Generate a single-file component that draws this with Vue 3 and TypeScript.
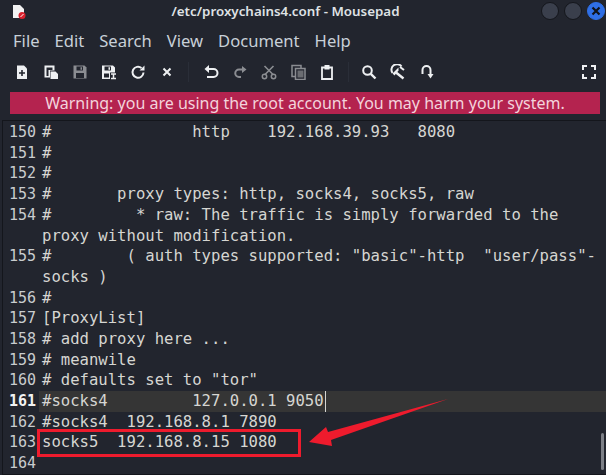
<script setup lang="ts">
const menus: string[] = ['File', 'Edit', 'Search', 'View', 'Document', 'Help']

interface Line { n: string; text: string; wrap?: string; current?: boolean }
const lines: Line[] = [
  { n: '150', text: '#               http    192.168.39.93   8080' },
  { n: '151', text: '#' },
  { n: '152', text: '#' },
  { n: '153', text: '#       proxy types: http, socks4, socks5, raw' },
  { n: '154', text: '#         * raw: The traffic is simply forwarded to the', wrap: 'proxy without modification.' },
  { n: '155', text: '#        ( auth types supported: "basic"-http  "user/pass"-', wrap: 'socks )' },
  { n: '156', text: '#' },
  { n: '157', text: '[ProxyList]' },
  { n: '158', text: '# add proxy here ...' },
  { n: '159', text: '# meanwile' },
  { n: '160', text: '# defaults set to "tor"' },
  { n: '161', text: '#socks4         127.0.0.1 9050', current: true },
  { n: '162', text: '#socks4  192.168.8.1 7890' },
  { n: '163', text: 'socks5  192.168.8.15 1080' },
  { n: '164', text: '' },
]
</script>

<template>
  <div class="win">
    <header class="titlebar">
      <svg class="appicon" width="14" height="15" viewBox="0 0 14 15">
        <path d="M1 1h7l4 4v9H1z" fill="#f2f2f2" />
        <circle cx="10" cy="11.500" r="3.500" fill="#d8202c" />
        <path d="M8.500 13l3-3" stroke="#fff" stroke-width="1" />
      </svg>
      <span class="title">/etc/proxychains4.conf - Mousepad</span>
      <div class="wbtns">
        <span class="wbtn"></span>
        <span class="wbtn"></span>
        <span class="wbtn close">
          <svg width="10" height="10" viewBox="0 0 10 10"><path d="M1.500 1.500l7 7M8.500 1.500l-7 7" stroke="#10131a" stroke-width="2.200" /></svg>
        </span>
      </div>
    </header>

    <nav class="menubar">
      <span v-for="m in menus" :key="m">{{ m }}</span>
    </nav>

    <div class="toolbar">
      <span class="tool">
        <svg viewBox="0 0 16 16"><path d="M3 1.500h7l3 3v10.500H3z" fill="#eef0f2" /><path d="M8 6v6M5 9h6" stroke="#22252e" stroke-width="1.600" /></svg>
      </span>
      <span class="tool">
        <svg viewBox="0 0 16 16"><path d="M1.500 1.500h10v5H7v7H1.500z" fill="#eef0f2" /><path d="M7.500 7.500h5l2.500 2.500v5H7.500z" fill="#eef0f2" /><path d="M3.500 3.500h6v2.500H5.500v6h-2z" fill="#22252e" /></svg>
      </span>
      <span class="tool">
        <svg viewBox="0 0 16 16"><path d="M1.500 1.500h11l2 2v11h-13z" fill="#8b8d92" /><path d="M4.500 2.500h6.500v4H4.500zM4 9h8v5H4z" fill="#22252e" /><path d="M8.500 3.200h1.500v2.500H8.500z" fill="#8b8d92" /></svg>
      </span>
      <span class="tool">
        <svg viewBox="0 0 16 16"><path d="M1 1.500h11l2 2v5H9V15H1z" fill="#eef0f2" /><path d="M3.500 2.500h6.500v4H3.500zM3 9.500h5v4H3z" fill="#22252e" /><path d="M7.500 3.200h1.500v2.500H7.500z" fill="#eef0f2" /><path d="M10 10h5M12.500 10v4.500M10 14.500h5" stroke="#eef0f2" stroke-width="1.500" fill="none" /></svg>
      </span>
      <span class="tool">
        <svg viewBox="0 0 16 16"><path d="M13.500 8.500A5.500 5.500 0 1 1 11.500 4" fill="none" stroke="#eef0f2" stroke-width="2" /><path d="M9.500 6.500H14.500V1.500z" fill="#eef0f2" /></svg>
      </span>
      <span class="tool">
        <svg viewBox="0 0 16 16"><path d="M4.500 4.500l7 7M11.500 4.500l-7 7" stroke="#eef0f2" stroke-width="2" /></svg>
      </span>
      <span class="sep first"></span>
      <span class="tool">
        <svg viewBox="0 0 16 16"><path d="M5 5h5.500a3.500 3.500 0 0 1 0 8H4" fill="none" stroke="#eef0f2" stroke-width="2" /><path d="M6 1v8L1.500 5z" fill="#eef0f2" /></svg>
      </span>
      <span class="tool">
        <svg viewBox="0 0 16 16"><path d="M11 5.500H7a3.500 3.500 0 0 0 0 7.500h2" fill="none" stroke="#8b8d92" stroke-width="2" /><path d="M10 2v7L14.500 5.500z" fill="#8b8d92" /></svg>
      </span>
      <span class="tool">
        <svg viewBox="0 0 16 16"><path d="M3.500 2l9 9M12.500 2l-9 9" stroke="#8b8d92" stroke-width="1.600" /><circle cx="3.500" cy="12.500" r="2.200" fill="none" stroke="#8b8d92" stroke-width="1.500" /><circle cx="12.500" cy="12.500" r="2.200" fill="none" stroke="#8b8d92" stroke-width="1.500" /></svg>
      </span>
      <span class="tool">
        <svg viewBox="0 0 16 16"><path d="M2 1.500h9v11H2z" fill="none" stroke="#8b8d92" stroke-width="1.500" /><path d="M5.500 4.500h9.500v11H5.500z" fill="#22252e" stroke="#8b8d92" stroke-width="1.500" /><path d="M7.500 6.500h6v7h-6z" fill="#6b6d72" /></svg>
      </span>
      <span class="tool">
        <svg viewBox="0 0 16 16"><path d="M3 3.500h10V15H3z" fill="none" stroke="#eef0f2" stroke-width="1.800" /><path d="M5.500 1h5V5.500h-5z" fill="#eef0f2" /></svg>
      </span>
      <span class="sep"></span>
      <span class="tool">
        <svg viewBox="0 0 16 16"><circle cx="6.500" cy="6.500" r="4.300" fill="none" stroke="#eef0f2" stroke-width="2" /><path d="M9.800 9.800l4.700 4.700" stroke="#eef0f2" stroke-width="2.400" /></svg>
      </span>
      <span class="tool">
        <svg viewBox="0 0 16 16"><path d="M2.500 9a5.500 5.500 0 0 1 9-6.500" fill="none" stroke="#eef0f2" stroke-width="2" /><path d="M8.500 3.500l-6 6 2 2 4-5z" fill="#eef0f2" /><path d="M6 8.500l7.500 6" stroke="#eef0f2" stroke-width="2.400" /><path d="M10 3l4 3" stroke="#eef0f2" stroke-width="2" /></svg>
      </span>
      <span class="tool">
        <svg viewBox="0 0 16 16"><path d="M3.500 10V6a4 4 0 0 1 8 0v4" fill="none" stroke="#eef0f2" stroke-width="2" /><path d="M8.500 10h6L11.500 14.500z" fill="#eef0f2" /></svg>
      </span>
      <span class="spacer"></span>
      <span class="tool fs">
        <svg viewBox="0 0 16 16"><path d="M2 6V2h4M10 2h4v4M14 10v4h-4M6 14H2v-4" fill="none" stroke="#eef0f2" stroke-width="2" /></svg>
      </span>
    </div>

    <div class="warning">Warning: you are using the root account. You may harm your system.</div>

    <main class="editor">
      <div v-for="l in lines" :key="l.n" class="row" :class="{ current: l.current }">
        <span class="num">{{ l.n }}</span>
        <div class="code">
          <div class="ln"><span>{{ l.text }}</span><i v-if="l.current" class="caret"></i></div>
          <div v-if="l.wrap" class="ln">{{ l.wrap }}</div>
        </div>
      </div>
      <span class="scrollbar"></span>
    </main>

    <span class="redbox"></span>
    <svg class="arrow" width="150" height="50" viewBox="0 0 150 50">
      <path d="M140 1 L20 34 L18 29 L1 44 L24 48 L23 42 Z" fill="#ee1b2d" />
    </svg>
  </div>
</template>

<style>
html, body { margin: 0; background: #22252e; }
</style>

<style scoped>
.win {
  position: relative;
  width: 606px;
  height: 475px;
  overflow: hidden;
  background: #22252e;
  color: #d5d7da;
  font-family: "Noto Sans", sans-serif;
  box-sizing: border-box;
}
.titlebar {
  height: 21px;
  display: flex;
  align-items: center;
  justify-content: center;
  position: relative;
}
.appicon { position: absolute; left: 12px; top: 4px; }
.title {
  font-size: 13.350px;
  font-weight: 600;
  color: #dfe1e4;
  padding-right: 35px;
}
.wbtns {
  position: absolute;
  right: 1px;
  top: 2px;
  display: flex;
  gap: 5px;
}
.wbtn {
  width: 16px;
  height: 16px;
  border-radius: 50%;
  background: #3a3f4c;
  border: 1px solid #14161c;
  display: flex;
  align-items: center;
  justify-content: center;
}
.wbtn.close { background: #2f6fe6; border-color: #2f6fe6; }
.menubar {
  height: 38px;
  display: flex;
  align-items: center;
  padding-left: 13px;
  gap: 15px;
  font-size: 16.600px;
  color: #c8d0d8;
  box-sizing: border-box;
}
.toolbar {
  height: 29px;
  display: flex;
  align-items: center;
  padding: 0 9px 0 14px;
  margin-top: -2px;
}
.tool {
  width: 29px;
  height: 16px;
  display: flex;
  justify-content: flex-start;
  flex: none;
}
.tool svg { width: 16px; height: 16px; }
.sep {
  width: 1px;
  height: 20px;
  background: #2a2e38;
  margin: 0 12px 0 0;
  flex: none;
}
.sep.first { margin-right: 14px; }
.spacer { flex: 1; }
.tool.fs { width: 16px; }
.warning {
  margin: 6px 6px 0 10px;
  height: 22px;
  line-height: 22px;
  background: #b4234f;
  color: #f3d3dc;
  font-size: 16px;
  text-align: center;
}
.editor {
  position: relative;
  margin: 6px 0 0 2px;
  height: 352px;
  border-top: 1px solid #14161c;
  border-left: 1px solid #14161c;
  border-bottom: 1px solid #14161c;
  padding-top: 1px;
  font-family: "DejaVu Sans Mono", monospace;
  font-size: 15.600px;
  line-height: 20.700px;
  color: #d6d6d2;
}
.row { display: flex; }
.row.current { background: #353535; margin-left: 36px; }
.row.current .num { margin-left: -36px; background: #22252e; font-weight: 700; color: #f2f2f2; }
.num {
  width: 33px;
  padding-left: 6px;
  flex: none;
  box-sizing: border-box;
  color: #c9ccce;
  font-size: 15px;
}
.code { padding-left: 6px; white-space: pre; flex: 1; }
.ln { display: flex; align-items: stretch; height: 20.700px; }
.caret { width: 1px; background: #d6d6d2; display: block; margin-left: 1px; }
.scrollbar {
  position: absolute;
  right: 2px;
  top: 312px;
  width: 3px;
  height: 37px;
  border-radius: 2px;
  background: #7d8087;
}
.redbox {
  position: absolute;
  left: 37px;
  top: 429px;
  width: 264px;
  height: 28px;
  border: 3px solid #ee1b2d;
  box-sizing: border-box;
}
.arrow { position: absolute; left: 308px; top: 398px; }
</style>
